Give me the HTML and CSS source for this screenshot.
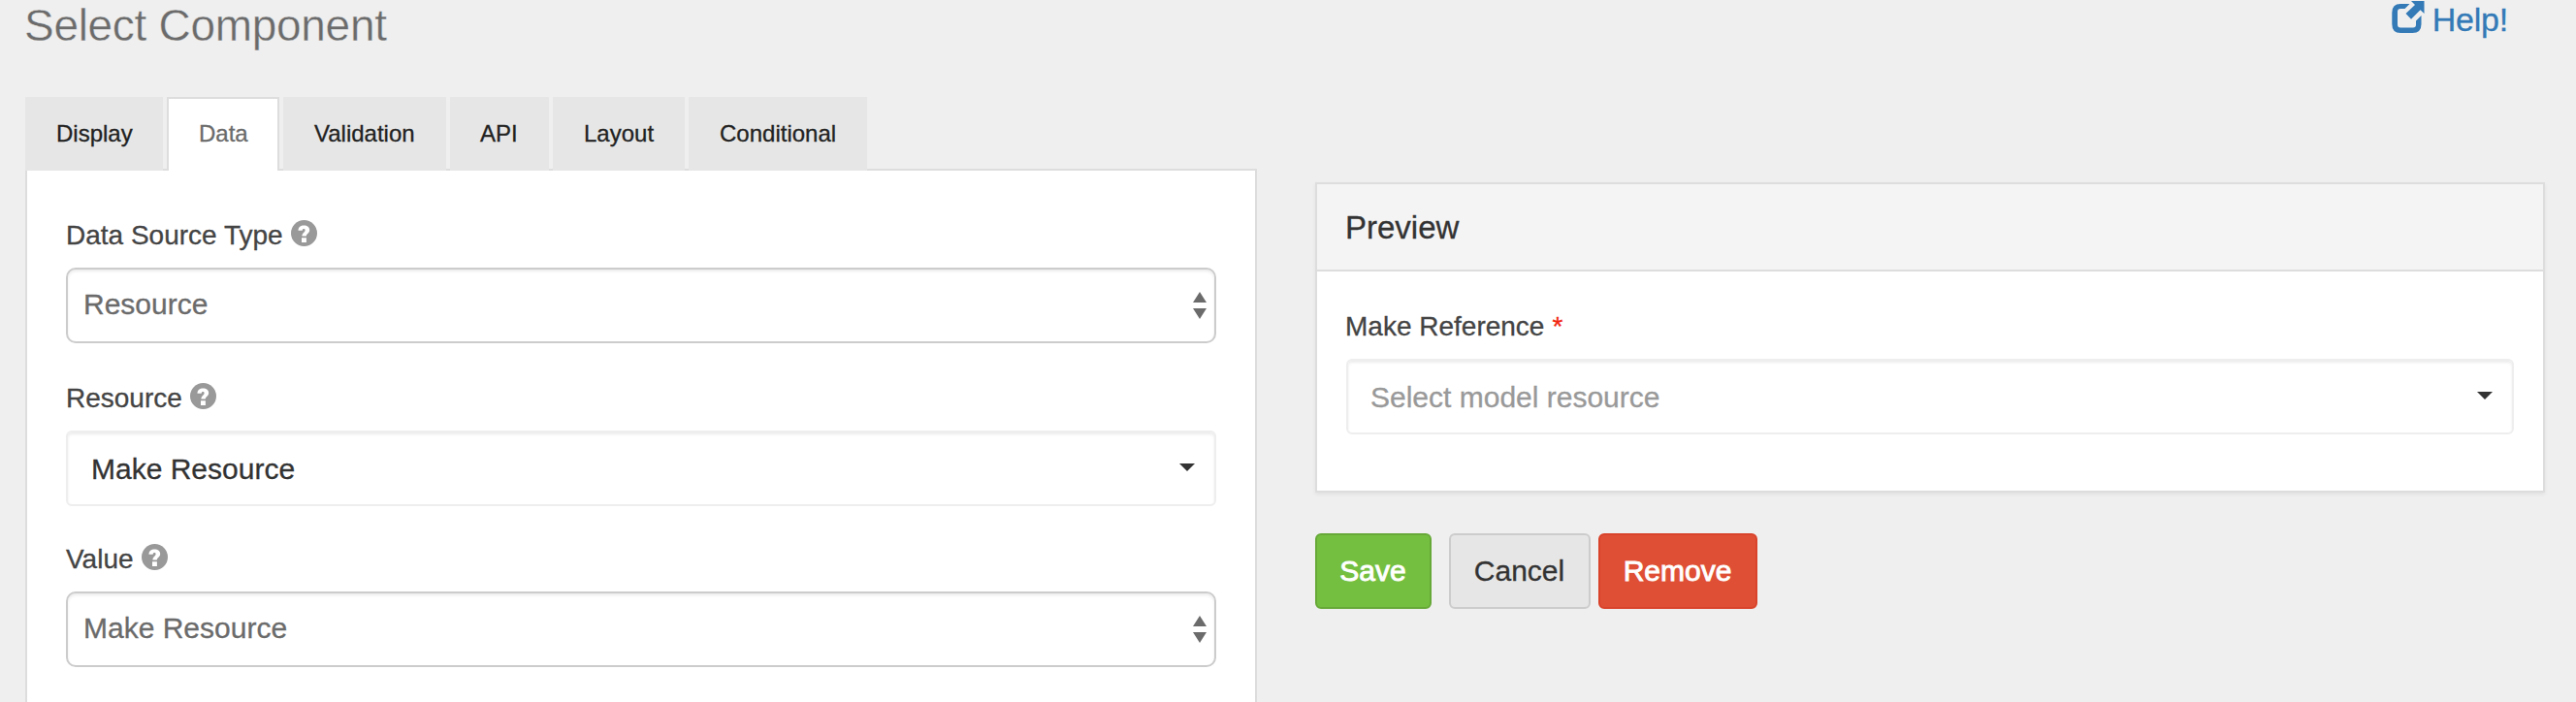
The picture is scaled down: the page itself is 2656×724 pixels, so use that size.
FILE: index.html
```html
<!DOCTYPE html>
<html lang="en">
<head>
<meta charset="utf-8">
<title>Select Component</title>
<link rel="stylesheet" href="styles.css">
</head>
<body>
<svg class="defs" aria-hidden="true">
  <symbol id="question" viewBox="0 0 27 27">
    <circle cx="13.5" cy="13.5" r="13.5" fill="#999"/>
    <path d="M7.500 10.800C7.500 7.200 10 5.500 13.400 5.500C16.800 5.500 19.200 7.300 19.200 10.200C19.200 13.600 15.800 13.800 15.800 16.600H11.400C11.400 12.800 14.600 12.600 14.600 10.400C14.600 9.500 14 9.100 13.200 9.100C12.300 9.100 11.800 9.800 11.700 10.800ZM11 18.300H15.900V23H11Z" fill="#fff"/>
  </symbol>
</svg>
<header class="header">
  <h1 class="title">Select Component</h1>
  <a class="help">
    <svg class="help-icon" viewBox="0 0 34 34"><path d="M18.500 4L13.500 9H9Q6 9 6 12V25.500Q6 28.500 9 28.500H22Q25 28.500 25 25.500V21.500L30.500 16V25Q30.500 34 21.500 34H9Q0.300 34 0.300 25V13Q0.300 4 9 4Z" fill="#337ab7"/><path d="M20 1H33.500V14L29.500 10.200L20 19.800L14.500 14L24 5Z" fill="#337ab7"/></svg>
    <span>Help!</span>
  </a>
</header>
<main class="columns">
  <section class="settings">
    <nav class="tabs">
      <a class="tab">Display</a>
      <a class="tab active">Data</a>
      <a class="tab">Validation</a>
      <a class="tab">API</a>
      <a class="tab">Layout</a>
      <a class="tab">Conditional</a>
    </nav>
    <div class="pane">
      <div class="label">Data Source Type<svg class="q"><use href="#question"/></svg></div>
      <div class="control native"><span>Resource</span><svg class="arrows" viewBox="0 0 14 28"><path d="M7 0L14 11H0ZM0 17H14L7 28Z" fill="#6b6b6b"/></svg></div>
      <div class="label second">Resource<svg class="q"><use href="#question"/></svg></div>
      <div class="control choice"><span>Make Resource</span><i class="caret"></i></div>
      <div class="label third">Value<svg class="q"><use href="#question"/></svg></div>
      <div class="control native"><span>Make Resource</span><svg class="arrows" viewBox="0 0 14 28"><path d="M7 0L14 11H0ZM0 17H14L7 28Z" fill="#6b6b6b"/></svg></div>
    </div>
  </section>
  <section class="side">
    <div class="card">
      <h2 class="card-head">Preview</h2>
      <div class="card-body">
        <div class="label">Make Reference<span class="required">*</span></div>
        <div class="control choice placeholder"><span>Select model resource</span><i class="caret"></i></div>
      </div>
    </div>
    <div class="buttons">
      <button class="btn save">Save</button>
      <button class="btn cancel">Cancel</button>
      <button class="btn remove">Remove</button>
    </div>
  </section>
</main>
</body>
</html>
```
FILE: styles.css
```css
* { box-sizing: border-box; }
body {
  margin: 0;
  height: 724px;
  overflow: hidden;
  background: #efefef;
  color: #444;
  font-family: "Liberation Sans", Arial, sans-serif;
}
.defs { display: none; }
.header {
  display: flex;
  justify-content: space-between;
  height: 100px;
  padding: 0 70px 0 25px;
}
.title {
  margin: 0;
  font-size: 46px;
  font-weight: 400;
  line-height: 53px;
  letter-spacing: -0.3px;
  color: #6b6b6b;
  -webkit-text-stroke: 0.4px #efefef;
}
.help {
  display: flex;
  gap: 8px;
  font-size: 34px;
  line-height: 40px;
  letter-spacing: -0.2px;
  color: #337ab7;
}
.help-icon { width: 34px; height: 34px; }
.help span, .tab, .label, .control span, .card-head, .cancel { -webkit-text-stroke: 0.3px currentColor; }
.columns {
  display: flex;
  gap: 60px;
  padding-left: 26px;
}
.settings { width: 1270px; }
.tabs { position: relative; z-index: 1; display: flex; gap: 4px; height: 76px; }
.tab {
  height: 76px;
  padding: 0 32px;
  font-size: 24px;
  line-height: 76px;
  color: #222;
  background: #e6e6e6;
}
.tab:nth-child(1) { width: 142px; }
.tab:nth-child(3) { width: 168px; }
.tab:nth-child(4) { width: 102px; padding: 0 31px; }
.tab:nth-child(5) { width: 136px; }
.tab:nth-child(6) { width: 184px; }
.tab.active {
  width: 116px;
  padding: 0 31px;
  line-height: 72px;
  color: #6b6b6b;
  background: #fff;
  border: 2px solid #ddd;
  border-bottom: 0;
}
.pane {
  height: 560px;
  margin-top: -2px;
  padding: 46px 40px 0;
  background: #fff;
  border: 2px solid #ddd;
}
.label {
  display: flex;
  height: 54px;
  font-size: 28px;
  line-height: 41px;
}
.q { width: 27px; height: 27px; margin: 5px 0 0 8px; }
.second { margin-top: 36px; }
.third { height: 54px; margin-top: 34px; }
.control {
  display: flex;
  justify-content: space-between;
  height: 78px;
  border: 2px solid #ccc;
  font-size: 30px;
  line-height: 71px;
  background: #fff;
}
.native {
  padding: 0 8px 0 16px;
  border-radius: 10px;
  color: #6b6b6b;
  box-shadow: inset 0 2px 3px rgba(0,0,0,.08);
}
.arrows { width: 14px; height: 28px; margin-top: 23px; }
.choice {
  padding: 0 20px 0 24px;
  line-height: 75px;
  border-color: #eee;
  border-radius: 6px;
  color: #333;
  box-shadow: inset 0 2px 3px rgba(0,0,0,.08);
}
.caret {
  width: 0;
  height: 0;
  margin-top: 32px;
  border: 8px solid transparent;
  border-top-color: #333;
  border-bottom: 0;
}
.side { width: 1268px; padding-top: 88px; }
.card {
  height: 320px;
  background: #fff;
  border: 2px solid #ddd;
  box-shadow: 0 2px 4px rgba(0,0,0,.06);
}
.card-head {
  height: 90px;
  margin: 0;
  padding-left: 29px;
  font-size: 33px;
  font-weight: 400;
  line-height: 90px;
  color: #333;
  background: #f4f4f4;
  border-bottom: 2px solid #ddd;
}
.card-body { padding: 36px 30px 0; }
.card-body .label { margin-left: -1px; }
.required { margin-left: 8px; color: #f22613; }
.placeholder { padding-left: 23px; }
.placeholder span { color: #999; }
.buttons { display: flex; margin-top: 42px; }
.btn {
  height: 78px;
  padding: 0 1px 0 0;
  border: 2px solid;
  border-radius: 6px;
  font: 30px "Liberation Sans", Arial, sans-serif;
  color: #fff;
}
.save, .remove { -webkit-text-stroke: 0.9px #fff; }
.save { width: 120px; background: #75bf40; border-color: #67a938; }
.cancel { width: 146px; margin: 0 8px 0 18px; color: #333; background: #e6e6e6; border-color: #ccc; }
.remove { width: 164px; background: #df4f35; border-color: #d9432b; }
```
